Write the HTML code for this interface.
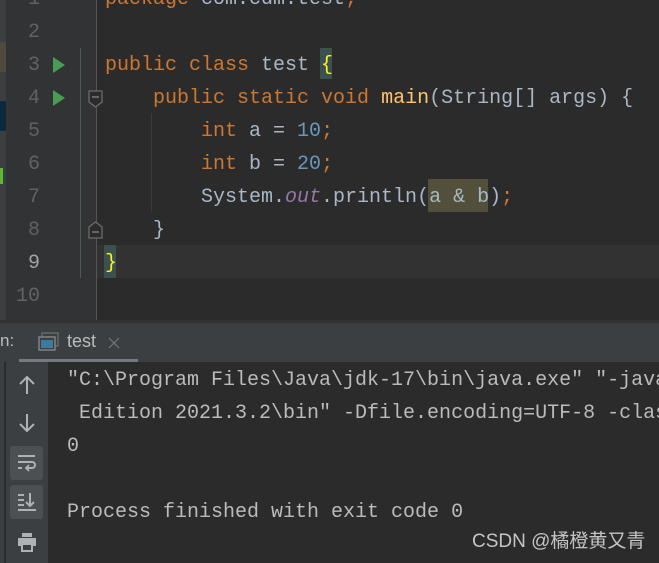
<!DOCTYPE html>
<html><head><meta charset="utf-8"><style>
*{margin:0;padding:0;box-sizing:border-box}
body{width:659px;height:563px;overflow:hidden;background:#2b2b2b;position:relative;font-family:"DejaVu Sans Mono","Liberation Mono",monospace}
.abs{position:absolute}
.code{position:absolute;left:105px;font-size:20px;line-height:33px;white-space:pre;color:#a9b7c6;font-family:"Liberation Mono",monospace}
.ln{position:absolute;width:40px;left:0;text-align:right;font-size:20px;line-height:33px;color:#606366;font-family:"Liberation Mono",monospace}
.k{color:#cc7832}.n{color:#6897bb}.o{color:#9876aa;font-style:italic}
.con{position:absolute;left:67px;width:592px;overflow:hidden;font-size:20px;line-height:33px;white-space:pre;color:#bbbbbb;font-family:"Liberation Mono",monospace}
</style></head><body>
<div class="abs" style="left:0;top:0;width:6px;height:320px;background:#3c3f41"></div>
<div class="abs" style="left:0;top:42px;width:6px;height:30px;background:#4f4a3c"></div>
<div class="abs" style="left:0;top:101px;width:6px;height:30px;background:#0d293e"></div>
<div class="abs" style="left:0;top:168px;width:3px;height:16px;background:#5fb832"></div>
<div class="abs" style="left:6px;top:0;width:91px;height:320px;background:#313335"></div>
<div class="abs" style="left:96px;top:0;width:1px;height:320px;background:#555"></div>
<div class="abs" style="left:80px;top:48px;width:1px;height:230px;background:#4a5a55"></div>
<div class="abs" style="left:151px;top:113px;width:1px;height:99px;background:#3b3b3b"></div>
<div class="abs" style="left:97px;top:245px;width:562px;height:33px;background:#323232"></div>
<svg class="abs" style="left:52px;top:56px" width="14" height="18"><path d="M1 1L13 9L1 17Z" fill="#499c54"/></svg>
<svg class="abs" style="left:52px;top:89px" width="14" height="18"><path d="M1 1L13 9L1 17Z" fill="#499c54"/></svg>
<svg class="abs" style="left:88px;top:90px" width="16" height="19"><path d="M1 1H14V12L7.5 17L1 12Z" fill="#2b2b2b" stroke="#6b6b6b" stroke-width="1.3"/><path d="M4 7H11" stroke="#888" stroke-width="1.3"/></svg>
<svg class="abs" style="left:88px;top:220px" width="16" height="19"><path d="M1 18H14V7L7.5 2L1 7Z" fill="#2b2b2b" stroke="#6b6b6b" stroke-width="1.3"/><path d="M4 12H11" stroke="#888" stroke-width="1.3"/></svg>
<div class="ln" style="top:-17px">1</div>
<div class="ln" style="top:16px">2</div>
<div class="ln" style="top:49px">3</div>
<div class="ln" style="top:82px">4</div>
<div class="ln" style="top:115px">5</div>
<div class="ln" style="top:148px">6</div>
<div class="ln" style="top:181px">7</div>
<div class="ln" style="top:214px">8</div>
<div class="ln" style="top:247px;color:#a4a3a3">9</div>
<div class="ln" style="top:280px">10</div>
<div class="abs" style="left:320px;top:48px;width:12px;height:31px;background:#3b514d"></div>
<div class="abs" style="left:104px;top:245px;width:12px;height:33px;background:#3b514d"></div>
<div class="abs" style="left:428px;top:179px;width:60px;height:33px;background:#52503a"></div>
<div class="code" style="top:-17px"><span class="k">package</span> com.cdm.test<span class="k">;</span></div>
<div class="code" style="top:49px"><span class="k">public class</span> test <span style="color:#ffef28">{</span></div>
<div class="code" style="top:82px">    <span class="k">public static void</span> <span style="color:#ffc66d">main</span>(String[] args) {</div>
<div class="code" style="top:115px">        <span class="k">int</span> a = <span class="n">10</span><span class="k">;</span></div>
<div class="code" style="top:148px">        <span class="k">int</span> b = <span class="n">20</span><span class="k">;</span></div>
<div class="code" style="top:181px">        System.<span class="o">out</span>.println(a &amp; b)<span class="k">;</span></div>
<div class="code" style="top:214px">    }</div>
<div class="code" style="top:247px"><span style="color:#ffef28">}</span></div>
<div class="abs" style="left:0;top:320px;width:659px;height:3px;background:#323232"></div>
<div class="abs" style="left:0;top:323px;width:659px;height:39px;background:#3c3f41"></div>
<div class="abs" style="left:0;top:331px;font-family:'Liberation Sans',sans-serif;font-size:17px;color:#bbb">n:</div>
<svg class="abs" style="left:38px;top:332px" width="22" height="20"><rect x="4" y="1" width="16" height="13" fill="none" stroke="#6e6e6e" stroke-width="1.3"/><rect x="1" y="5" width="16" height="13" fill="#3c3f41" stroke="#8c8c8c" stroke-width="1.3"/><rect x="3" y="8" width="12" height="8" fill="#3d7aa0"/></svg>
<div class="abs" style="left:67px;top:331px;font-family:'Liberation Sans',sans-serif;font-size:18px;color:#bbb">test</div>
<svg class="abs" style="left:108px;top:337px" width="12" height="12"><path d="M1 1L11 11M11 1L1 11" stroke="#777" stroke-width="1.2"/></svg>
<div class="abs" style="left:19px;top:359px;width:119px;height:3px;background:#747a80"></div>
<div class="abs" style="left:6px;top:362px;width:42px;height:201px;background:#3c3f41"></div>
<div class="abs" style="left:0;top:362px;width:5px;height:201px;background:#3c3f41"></div>
<div class="abs" style="left:4px;top:362px;width:1px;height:201px;background:#2b2b2b"></div>
<svg class="abs" style="left:17px;top:374px" width="20" height="22"><path d="M10 20V3M3 10L10 3L17 10" fill="none" stroke="#afb1b3" stroke-width="2"/></svg>
<svg class="abs" style="left:17px;top:412px" width="20" height="22"><path d="M10 2V19M3 12L10 19L17 12" fill="none" stroke="#afb1b3" stroke-width="2"/></svg>
<div class="abs" style="left:10px;top:446px;width:33px;height:34px;background:#4c5052;border-radius:3px"></div>
<svg class="abs" style="left:16px;top:453px" width="22" height="20"><path d="M2 3H19M2 9H16a3 3 0 0 1 0 6H11M2 15H6" fill="none" stroke="#afb1b3" stroke-width="2"/><path d="M13 12L10 15L13 18" fill="none" stroke="#afb1b3" stroke-width="1.8"/></svg>
<div class="abs" style="left:10px;top:485px;width:33px;height:34px;background:#4c5052;border-radius:3px"></div>
<svg class="abs" style="left:16px;top:491px" width="22" height="22"><path d="M2 4H8M2 9H8M2 14H8M2 19H20M14 2V15M10 11L14 15L18 11" fill="none" stroke="#afb1b3" stroke-width="2"/></svg>
<svg class="abs" style="left:16px;top:531px" width="22" height="22"><rect x="6" y="2" width="10" height="4" fill="#afb1b3"/><rect x="2" y="7" width="18" height="8" fill="#afb1b3"/><rect x="6" y="13" width="10" height="7" fill="#3c3f41" stroke="#afb1b3" stroke-width="2"/></svg>
<div class="con" style="top:364px">"C:\Program Files\Java\jdk-17\bin\java.exe" "-javaagent</div>
<div class="con" style="top:397px"> Edition 2021.3.2\bin" -Dfile.encoding=UTF-8 -classpath</div>
<div class="con" style="top:430px">0</div>
<div class="con" style="top:496px">Process finished with exit code 0</div>
<div class="abs" style="left:472px;top:530px;font-family:'Liberation Sans','Noto Sans CJK SC',sans-serif;font-size:19px;line-height:24px;color:#c4c4c4">CSDN @橘橙黄又青</div>
</body></html>
